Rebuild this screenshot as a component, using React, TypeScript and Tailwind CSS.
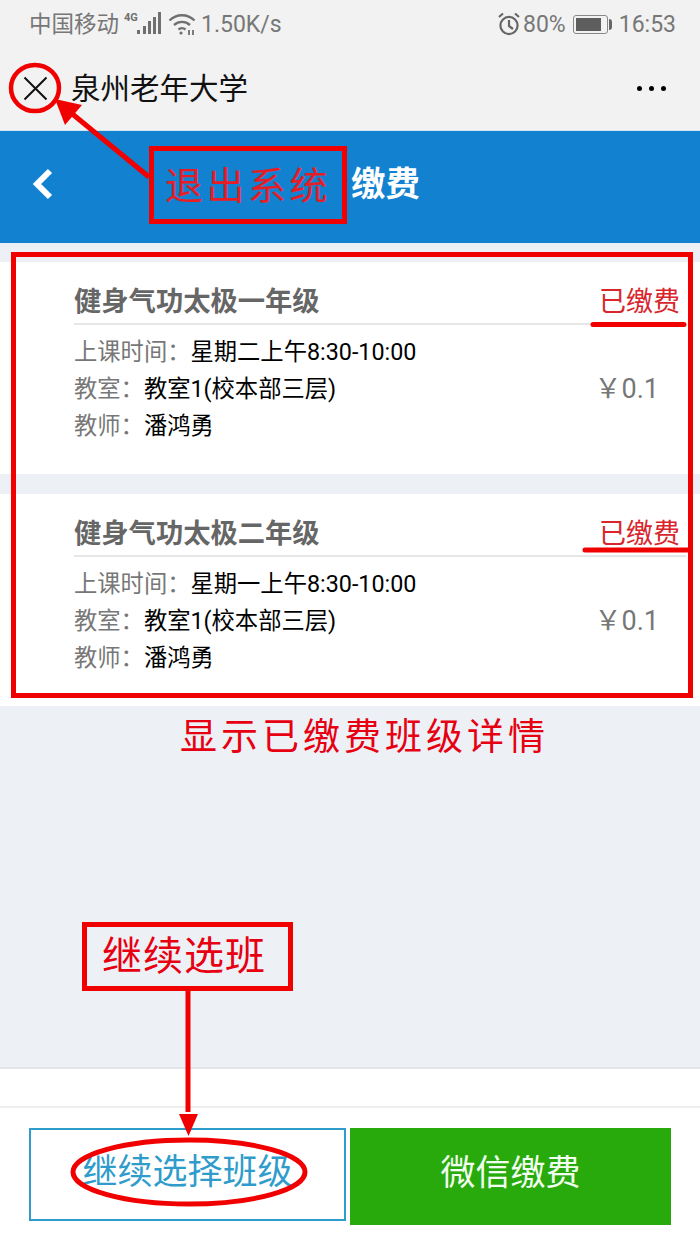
const font = { fontFamily: 'Roboto, "Noto Sans CJK SC", sans-serif' };

interface PaidClass {
  name: string;
  time: string;
}

const classes: PaidClass[] = [
  { name: '健身气功太极一年级', time: '星期二上午8:30-10:00' },
  { name: '健身气功太极二年级', time: '星期一上午8:30-10:00' },
];

function SignalIcon() {
  return (
    <svg width="38" height="26" viewBox="0 0 38 26" className="ml-[5px] text-[#6f6f6f]">
      <text x="0" y="10" fontSize="11" fontWeight="700" fill="currentColor" fontFamily="Roboto">4G</text>
      <rect x="13" y="19" width="3" height="4" fill="currentColor" />
      <rect x="19" y="15" width="3" height="8" fill="currentColor" />
      <rect x="24" y="10" width="3" height="13" fill="currentColor" />
      <rect x="29" y="6" width="3" height="17" fill="currentColor" />
      <rect x="34" y="1" width="3" height="22" fill="currentColor" />
    </svg>
  );
}

function WifiIcon() {
  return (
    <svg width="28" height="24" viewBox="0 0 28 24" fill="none" stroke="#6f6f6f" strokeWidth="2.4" className="ml-[6px]">
      <path d="M1.5 8.5C8.5 1.5 19.5 1.5 26.5 8.5" />
      <path d="M6 13C10.5 8.8 17.5 8.8 22 13" />
      <path d="M10.5 17.5C12.5 15.8 15.5 15.8 17.5 17.5" />
      <circle cx="13" cy="21" r="1.6" fill="#6f6f6f" stroke="none" />
      <path d="M21 18v5M25 18v5" strokeWidth="1.8" />
    </svg>
  );
}

function AlarmIcon() {
  return (
    <svg width="22" height="24" viewBox="0 0 22 24" fill="none" stroke="#666" strokeWidth="2.2">
      <circle cx="11" cy="13.5" r="8.6" />
      <path d="M11 8v6l4 3" />
      <path d="M1 5l4-3.5M21 5l-4-3.5" />
    </svg>
  );
}

function BatteryIcon() {
  return (
    <div className="flex items-center">
      <div className="flex h-[19px] w-[35px] items-center rounded-[3px] border border-[#888] p-[2px]">
        <div className="h-full w-[25px] bg-[#5e5e5e]" />
      </div>
      <div className="ml-[1px] h-[11px] w-[3px] rounded-r-sm bg-[#666]" />
    </div>
  );
}

function ClassCard({ item }: { item: PaidClass }) {
  return (
    <div className="h-[212px] bg-white pl-[74px] pr-[14px] pt-[20px]">
      <div className="flex h-[43px] items-center justify-between border-b-2 border-[#e6e6e6]">
        <span className="text-[27.3px] font-bold leading-none text-[#666]">{item.name}</span>
        <span className="pr-[6px] text-[27px] leading-none text-[#d8262c]">已缴费</span>
      </div>
      <div className="flex items-center justify-between pr-[27px] pt-[9px]">
        <div className="text-[23.3px] leading-[37px] text-black">
          <p><span className="text-[#777]">上课时间：</span>{item.time}</p>
          <p><span className="text-[#777]">教室：</span>教室1(校本部三层)</p>
          <p><span className="text-[#777]">教师：</span>潘鸿勇</p>
        </div>
        <span className="text-[27px] text-[#777]">￥0.1</span>
      </div>
    </div>
  );
}

function Annotations() {
  return (
    <div className="pointer-events-none absolute inset-0">
      <svg width="700" height="1244" className="absolute left-0 top-0" fill="none" stroke="#f10000">
        <ellipse cx="35" cy="88" rx="24" ry="23" strokeWidth="4.500" />
        <path d="M149 177L70 112" strokeWidth="5" />
        <path d="M55 99L82 105L65 125Z" fill="#f10000" stroke="none" />
        <path d="M188 990V1112" strokeWidth="5" />
        <path d="M179 1114H198L188.500 1136Z" fill="#f10000" stroke="none" />
        <ellipse cx="189" cy="1172" rx="116" ry="32" strokeWidth="5" />
        <path d="M593 324.500H684M585 550H688" strokeWidth="5" strokeLinecap="round" />
      </svg>
      <div className="absolute left-[149px] top-[146px] flex h-[78px] w-[198px] items-center justify-center border-[5px] border-[#f10000] pt-[2px] text-[38px] leading-none tracking-[3.500px] text-[#e81c24]">
        退出系统
      </div>
      <div className="absolute left-[11px] top-[252px] h-[446px] w-[682px] border-[5px] border-[#f10000]" />
      <div className="absolute left-[180px] top-[717px] text-[37px] leading-[42px] tracking-[4px] text-[#e60012]">
        显示已缴费班级详情
      </div>
      <div className="absolute left-[82px] top-[922px] flex h-[69px] w-[211px] items-center justify-center border-[5px] border-[#f10000] pr-[7px] text-[40px] leading-none tracking-[1px] text-[#e60012]">
        继续选班
      </div>
    </div>
  );
}

export default function App() {
  return (
    <div className="relative flex h-[1244px] w-[700px] flex-col overflow-hidden bg-[#edf0f5]" style={font}>
      {/* status bar + webview title */}
      <div className="h-[131px] border-b border-[#cfe6f5] bg-[#f2f2f2]">
        <div className="flex h-[48px] items-center justify-between pl-[29px] pr-[24px] text-[#777]">
          <div className="flex items-center">
            <span className="text-[22.500px] leading-none">中国移动</span>
            <SignalIcon />
            <WifiIcon />
            <span className="ml-[5px] text-[23px] leading-none">1.50K/s</span>
          </div>
          <div className="flex items-center">
            <AlarmIcon />
            <span className="ml-[3px] text-[23px] leading-none">80%</span>
            <div className="ml-[7px]"><BatteryIcon /></div>
            <span className="ml-[7px] text-[23px] leading-none">16:53</span>
          </div>
        </div>
        <div className="flex h-[80px] items-center pl-[23px] pr-[34px]">
          <svg width="25" height="25" viewBox="0 0 25 25" stroke="#111" strokeWidth="2" fill="none">
            <path d="M1.500 1.500L23.500 23.500M23.500 1.500L1.500 23.500" />
          </svg>
          <span className="ml-[23px] flex-1 pt-[4px] text-[29.500px] leading-none text-[#111]">泉州老年大学</span>
          <div className="flex gap-[7px]">
            <span className="h-[5px] w-[5px] rounded-full bg-black" />
            <span className="h-[5px] w-[5px] rounded-full bg-black" />
            <span className="h-[5px] w-[5px] rounded-full bg-black" />
          </div>
        </div>
      </div>

      {/* page header */}
      <div className="flex h-[112px] items-center bg-[#1282d0] pb-[6px] pl-[32px]">
        <svg width="22" height="32" viewBox="0 0 22 32" fill="none" stroke="#fff" strokeWidth="6">
          <path d="M18 3L5 16L18 29" />
        </svg>
        <span className="ml-[297px] text-[34.500px] font-bold leading-none text-white">缴费</span>
      </div>

      <div className="mt-[19px] flex flex-col gap-[20px]">
        {classes.map((c) => (
          <ClassCard key={c.name} item={c} />
        ))}
      </div>

      <div className="flex-1" />

      {/* footer */}
      <div className="h-[177px] border-t-2 border-[#e4e5e9] bg-white">
        <div className="h-[39px] border-b-2 border-[#eeeeee]" />
        <div className="flex items-start pl-[29px] pt-[20px]">
          <div className="flex h-[93px] w-[317px] items-center justify-center border-2 border-[#2f9ccb] pb-[4px] text-[35px] leading-none text-[#2f9ccb]">
            继续选择班级
          </div>
          <div className="ml-[4px] flex h-[97px] w-[321px] items-center justify-center bg-[#28aa0c] pb-[6px] text-[35px] leading-none text-[#f2fff0]">
            微信缴费
          </div>
        </div>
      </div>

      <Annotations />
    </div>
  );
}
